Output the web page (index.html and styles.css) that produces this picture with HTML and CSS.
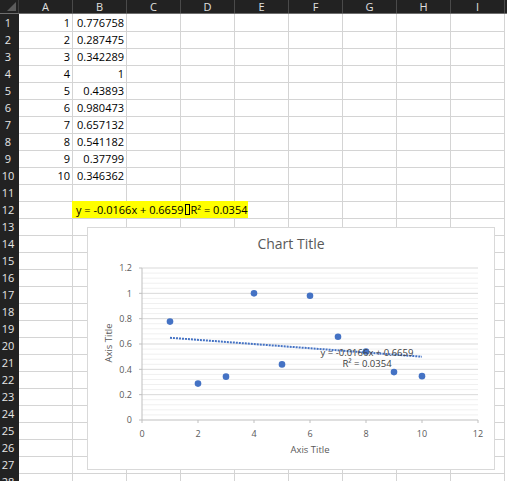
FILE: index.html
```html
<!DOCTYPE html>
<html>
<head>
<meta charset="utf-8">
<link rel="stylesheet" href="styles.css">
</head>
<body>
<div class="sheet">
  <div class="row head"><div class="corner"></div><div class="ch">A</div><div class="ch">B</div><div class="ch">C</div><div class="ch">D</div><div class="ch">E</div><div class="ch">F</div><div class="ch">G</div><div class="ch">H</div><div class="ch">I</div></div>
  <div class="row"><div class="rh">1</div><div class="c n">1</div><div class="c n">0.776758</div><div class="c"></div><div class="c"></div><div class="c"></div><div class="c"></div><div class="c"></div><div class="c"></div><div class="c"></div></div>
  <div class="row"><div class="rh">2</div><div class="c n">2</div><div class="c n">0.287475</div><div class="c"></div><div class="c"></div><div class="c"></div><div class="c"></div><div class="c"></div><div class="c"></div><div class="c"></div></div>
  <div class="row"><div class="rh">3</div><div class="c n">3</div><div class="c n">0.342289</div><div class="c"></div><div class="c"></div><div class="c"></div><div class="c"></div><div class="c"></div><div class="c"></div><div class="c"></div></div>
  <div class="row"><div class="rh">4</div><div class="c n">4</div><div class="c n">1</div><div class="c"></div><div class="c"></div><div class="c"></div><div class="c"></div><div class="c"></div><div class="c"></div><div class="c"></div></div>
  <div class="row"><div class="rh">5</div><div class="c n">5</div><div class="c n">0.43893</div><div class="c"></div><div class="c"></div><div class="c"></div><div class="c"></div><div class="c"></div><div class="c"></div><div class="c"></div></div>
  <div class="row"><div class="rh">6</div><div class="c n">6</div><div class="c n">0.980473</div><div class="c"></div><div class="c"></div><div class="c"></div><div class="c"></div><div class="c"></div><div class="c"></div><div class="c"></div></div>
  <div class="row"><div class="rh">7</div><div class="c n">7</div><div class="c n">0.657132</div><div class="c"></div><div class="c"></div><div class="c"></div><div class="c"></div><div class="c"></div><div class="c"></div><div class="c"></div></div>
  <div class="row"><div class="rh">8</div><div class="c n">8</div><div class="c n">0.541182</div><div class="c"></div><div class="c"></div><div class="c"></div><div class="c"></div><div class="c"></div><div class="c"></div><div class="c"></div></div>
  <div class="row"><div class="rh">9</div><div class="c n">9</div><div class="c n">0.37799</div><div class="c"></div><div class="c"></div><div class="c"></div><div class="c"></div><div class="c"></div><div class="c"></div><div class="c"></div></div>
  <div class="row"><div class="rh">10</div><div class="c n">10</div><div class="c n">0.346362</div><div class="c"></div><div class="c"></div><div class="c"></div><div class="c"></div><div class="c"></div><div class="c"></div><div class="c"></div></div>
  <div class="row"><div class="rh">11</div><div class="c"></div><div class="c"></div><div class="c"></div><div class="c"></div><div class="c"></div><div class="c"></div><div class="c"></div><div class="c"></div><div class="c"></div></div>
  <div class="row"><div class="rh">12</div><div class="c"></div><div class="c"></div><div class="c"></div><div class="c"></div><div class="c"></div><div class="c"></div><div class="c"></div><div class="c"></div><div class="c"></div></div>
  <div class="row"><div class="rh">13</div><div class="c"></div><div class="c"></div><div class="c"></div><div class="c"></div><div class="c"></div><div class="c"></div><div class="c"></div><div class="c"></div><div class="c"></div></div>
  <div class="row"><div class="rh">14</div><div class="c"></div><div class="c"></div><div class="c"></div><div class="c"></div><div class="c"></div><div class="c"></div><div class="c"></div><div class="c"></div><div class="c"></div></div>
  <div class="row"><div class="rh">15</div><div class="c"></div><div class="c"></div><div class="c"></div><div class="c"></div><div class="c"></div><div class="c"></div><div class="c"></div><div class="c"></div><div class="c"></div></div>
  <div class="row"><div class="rh">16</div><div class="c"></div><div class="c"></div><div class="c"></div><div class="c"></div><div class="c"></div><div class="c"></div><div class="c"></div><div class="c"></div><div class="c"></div></div>
  <div class="row"><div class="rh">17</div><div class="c"></div><div class="c"></div><div class="c"></div><div class="c"></div><div class="c"></div><div class="c"></div><div class="c"></div><div class="c"></div><div class="c"></div></div>
  <div class="row"><div class="rh">18</div><div class="c"></div><div class="c"></div><div class="c"></div><div class="c"></div><div class="c"></div><div class="c"></div><div class="c"></div><div class="c"></div><div class="c"></div></div>
  <div class="row"><div class="rh">19</div><div class="c"></div><div class="c"></div><div class="c"></div><div class="c"></div><div class="c"></div><div class="c"></div><div class="c"></div><div class="c"></div><div class="c"></div></div>
  <div class="row"><div class="rh">20</div><div class="c"></div><div class="c"></div><div class="c"></div><div class="c"></div><div class="c"></div><div class="c"></div><div class="c"></div><div class="c"></div><div class="c"></div></div>
  <div class="row"><div class="rh">21</div><div class="c"></div><div class="c"></div><div class="c"></div><div class="c"></div><div class="c"></div><div class="c"></div><div class="c"></div><div class="c"></div><div class="c"></div></div>
  <div class="row"><div class="rh">22</div><div class="c"></div><div class="c"></div><div class="c"></div><div class="c"></div><div class="c"></div><div class="c"></div><div class="c"></div><div class="c"></div><div class="c"></div></div>
  <div class="row"><div class="rh">23</div><div class="c"></div><div class="c"></div><div class="c"></div><div class="c"></div><div class="c"></div><div class="c"></div><div class="c"></div><div class="c"></div><div class="c"></div></div>
  <div class="row"><div class="rh">24</div><div class="c"></div><div class="c"></div><div class="c"></div><div class="c"></div><div class="c"></div><div class="c"></div><div class="c"></div><div class="c"></div><div class="c"></div></div>
  <div class="row"><div class="rh">25</div><div class="c"></div><div class="c"></div><div class="c"></div><div class="c"></div><div class="c"></div><div class="c"></div><div class="c"></div><div class="c"></div><div class="c"></div></div>
  <div class="row"><div class="rh">26</div><div class="c"></div><div class="c"></div><div class="c"></div><div class="c"></div><div class="c"></div><div class="c"></div><div class="c"></div><div class="c"></div><div class="c"></div></div>
  <div class="row"><div class="rh">27</div><div class="c"></div><div class="c"></div><div class="c"></div><div class="c"></div><div class="c"></div><div class="c"></div><div class="c"></div><div class="c"></div><div class="c"></div></div>
  <div class="row"><div class="rh">28</div><div class="c"></div><div class="c"></div><div class="c"></div><div class="c"></div><div class="c"></div><div class="c"></div><div class="c"></div><div class="c"></div><div class="c"></div></div>

  <div class="eqbox">y = -0.0166x + 0.6659<span class="nl"></span>R² = 0.0354</div>

  <div class="chart">
    <svg class="chart-svg" width="408" height="243" viewBox="0 0 408 243">
      <text class="title" x="204" y="22" text-anchor="middle">Chart Title</text>
      <g class="minor">
        <line x1="55" x2="391" y1="187.93" y2="187.93"/><line x1="55" x2="391" y1="182.87" y2="182.87"/><line x1="55" x2="391" y1="177.8" y2="177.8"/><line x1="55" x2="391" y1="172.73" y2="172.73"/>
        <line x1="55" x2="391" y1="162.6" y2="162.6"/><line x1="55" x2="391" y1="157.53" y2="157.53"/><line x1="55" x2="391" y1="152.47" y2="152.47"/><line x1="55" x2="391" y1="147.4" y2="147.4"/>
        <line x1="55" x2="391" y1="137.27" y2="137.27"/><line x1="55" x2="391" y1="132.2" y2="132.2"/><line x1="55" x2="391" y1="127.13" y2="127.13"/><line x1="55" x2="391" y1="122.07" y2="122.07"/>
        <line x1="55" x2="391" y1="111.93" y2="111.93"/><line x1="55" x2="391" y1="106.87" y2="106.87"/><line x1="55" x2="391" y1="101.8" y2="101.8"/><line x1="55" x2="391" y1="96.73" y2="96.73"/>
        <line x1="55" x2="391" y1="86.6" y2="86.6"/><line x1="55" x2="391" y1="81.53" y2="81.53"/><line x1="55" x2="391" y1="76.47" y2="76.47"/><line x1="55" x2="391" y1="71.4" y2="71.4"/>
        <line x1="55" x2="391" y1="61.27" y2="61.27"/><line x1="55" x2="391" y1="56.2" y2="56.2"/><line x1="55" x2="391" y1="51.13" y2="51.13"/><line x1="55" x2="391" y1="46.07" y2="46.07"/>
      </g>
      <g class="major">
        <line x1="55" x2="391" y1="167.67" y2="167.67"/><line x1="55" x2="391" y1="142.33" y2="142.33"/><line x1="55" x2="391" y1="117" y2="117"/>
        <line x1="55" x2="391" y1="91.67" y2="91.67"/><line x1="55" x2="391" y1="66.33" y2="66.33"/><line x1="55" x2="391" y1="41" y2="41"/>
      </g>
      <g class="axis">
        <line x1="55" x2="55" y1="41" y2="193"/>
        <line x1="52" x2="391" y1="193" y2="193"/>
        <line x1="52" x2="55" y1="167.67" y2="167.67"/><line x1="52" x2="55" y1="142.33" y2="142.33"/><line x1="52" x2="55" y1="117" y2="117"/>
        <line x1="52" x2="55" y1="91.67" y2="91.67"/><line x1="52" x2="55" y1="66.33" y2="66.33"/><line x1="52" x2="55" y1="41" y2="41"/>
        <line x1="55" x2="55" y1="193" y2="196"/><line x1="111" x2="111" y1="193" y2="196"/><line x1="167" x2="167" y1="193" y2="196"/>
        <line x1="223" x2="223" y1="193" y2="196"/><line x1="279" x2="279" y1="193" y2="196"/><line x1="335" x2="335" y1="193" y2="196"/><line x1="391" x2="391" y1="193" y2="196"/>
      </g>
      <g class="tick" text-anchor="end">
        <text x="45" y="44">1.2</text><text x="45" y="69.5">1</text><text x="45" y="94.8">0.8</text>
        <text x="45" y="120">0.6</text><text x="45" y="145.5">0.4</text><text x="45" y="170.8">0.2</text><text x="45" y="196">0</text>
      </g>
      <g class="tick" text-anchor="middle">
        <text x="55" y="209.5">0</text><text x="111" y="209.5">2</text><text x="167" y="209.5">4</text><text x="223" y="209.5">6</text>
        <text x="279" y="209.5">8</text><text x="335" y="209.5">10</text><text x="391" y="209.5">12</text>
      </g>
      <text class="axtitle" x="223" y="226" text-anchor="middle">Axis Title</text>
      <text class="axtitle" x="0" y="0" text-anchor="middle" transform="translate(25 116) rotate(-90)">Axis Title</text>
      <line class="trend" x1="83" y1="110.75" x2="335" y2="129.68"/>
      <g class="pts">
        <circle cx="83" cy="94.61" r="3.3"/><circle cx="111" cy="156.59" r="3.3"/><circle cx="139" cy="149.64" r="3.3"/>
        <circle cx="167" cy="66.33" r="3.3"/><circle cx="195" cy="137.4" r="3.3"/><circle cx="223" cy="68.81" r="3.3"/>
        <circle cx="251" cy="109.76" r="3.3"/><circle cx="279" cy="124.45" r="3.3"/><circle cx="307" cy="145.12" r="3.3"/>
        <circle cx="335" cy="149.13" r="3.3"/>
      </g>
      <g class="eq" text-anchor="middle">
        <text x="280" y="128.5">y = -0.0166x + 0.6659</text>
        <text x="280" y="139.5">R² = 0.0354</text>
      </g>
    </svg>
  </div>
</div>
</body>
</html>
```
FILE: styles.css
```css
html, body {
  margin: 0;
  padding: 0;
  background: #ffffff;
  overflow: hidden;
}

body {
  width: 507px;
  height: 481px;
  font-family: "Open Sans", "Liberation Sans", sans-serif;
}

.sheet {
  position: relative;
  display: flex;
  flex-direction: column;
  width: 507px;
}

.row {
  display: grid;
  grid-template-columns: 19px repeat(9, 54px);
  height: 17px;
}

.row.head {
  height: 14px;
  background: #222222;
  border-bottom: 1px solid #6e6e6e;
  box-sizing: border-box;
}

.corner {
  position: relative;
  border-right: 1px solid #3d3d3d;
}

.corner::after {
  content: "";
  position: absolute;
  right: 2px;
  bottom: 2px;
  width: 0;
  height: 0;
  border-left: 9px solid transparent;
  border-bottom: 9px solid #5c5c5c;
}

.ch {
  color: #e0e0e0;
  font-size: 11px;
  line-height: 13px;
  text-align: center;
  border-right: 1px solid #4a4a4a;
}

.rh {
  background: #222222;
  color: #e6e6e6;
  font-size: 11px;
  line-height: 17px;
  text-align: center;
  padding-right: 3px;
  box-sizing: border-box;
  border-bottom: 1px solid #484848;
}

.c {
  box-sizing: border-box;
  border-right: 1px solid #d4d4d4;
  border-bottom: 1px solid #d4d4d4;
  font-size: 11px;
  line-height: 17px;
  color: #000000;
  white-space: nowrap;
  overflow: hidden;
}

.c.n {
  text-align: right;
  padding-right: 2px;
}

.eqbox {
  position: absolute;
  left: 72px;
  top: 201px;
  width: 176px;
  height: 17px;
  box-sizing: border-box;
  background: #ffff00;
  color: #000000;
  font-size: 11px;
  line-height: 17px;
  padding-left: 4px;
  white-space: nowrap;
}

.nl {
  display: inline-block;
  width: 3px;
  height: 9px;
  border: 1px solid #000000;
  margin: 0 1px;
  vertical-align: -1px;
}

.chart {
  position: absolute;
  left: 87px;
  top: 227px;
  width: 408px;
  height: 243px;
  box-sizing: border-box;
  border: 1px solid #d9d9d9;
  background: #ffffff;
}

.chart-svg {
  display: block;
  position: absolute;
  left: -1px;
  top: -1px;
  font-family: "Open Sans", "Liberation Sans", sans-serif;
}

.title {
  font-size: 14px;
  fill: #595959;
}

.minor line {
  stroke: #f0f0f0;
  stroke-width: 1;
}

.major line {
  stroke: #d9d9d9;
  stroke-width: 1;
}

.axis line {
  stroke: #bfbfbf;
  stroke-width: 1;
}

.tick {
  font-size: 9px;
  fill: #595959;
}

.axtitle {
  font-size: 9.5px;
  fill: #595959;
}

.trend {
  stroke: #4472c4;
  stroke-width: 2;
  stroke-dasharray: 2 1;
}

.pts circle {
  fill: #4472c4;
}

.eq {
  font-size: 9.5px;
  fill: #404040;
}
```
